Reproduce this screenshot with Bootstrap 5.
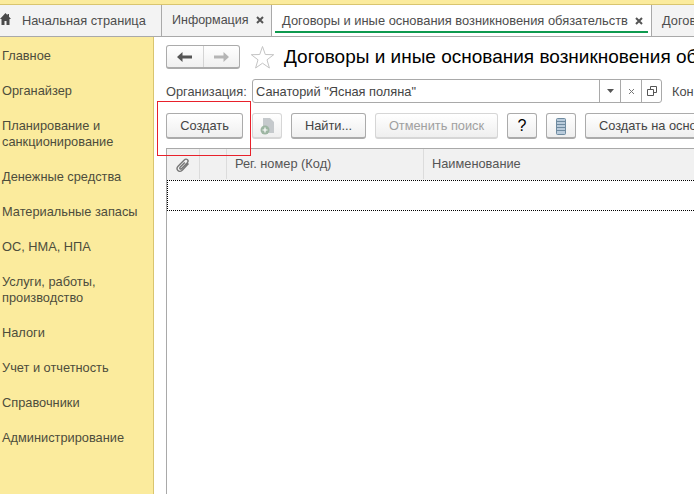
<!DOCTYPE html>
<html lang="ru">
<head>
    <title>Договоры</title>
    <meta charset="UTF-8">
    <link href="https://cdn.jsdelivr.net/npm/bootstrap@5.3.0/dist/css/bootstrap.min.css" rel="stylesheet">
    <style>
        html, body { width: 694px; height: 494px; overflow: hidden; }
        body { font-family: "Liberation Sans", Arial, sans-serif; font-size: 12.8px; color: #4a4a4a; background: #fff; }
        .top-strip { height: 5px; background: #fbeb9d; border-bottom: 1px solid #d9c56f; }
        .tab-bar { height: 32px; background: #f3f3f3; border-bottom: 1px solid #a9a9a9; }
        .tab-item { flex: none; height: 31px; padding-top: 8px; border-right: 1px solid #a9a9a9; white-space: nowrap; color: #4d4d4d; line-height: 15px; }
        .tab-home { width: 162px; padding-left: 22px; position: relative; }
        .tab-home svg { position: absolute; left: 0; top: 8px; }
        .tab-info { width: 110px; padding-left: 10px; font-size: 12.5px; }
        .tab-active { width: 380px; background: #fff; padding-left: 10px; position: relative; font-size: 12.9px; }
        .tab-active::after { content: ""; position: absolute; left: 3px; right: 3px; bottom: 3px; height: 2px; background: #0f9a4f; }
        .tab-next { padding-left: 10px; border-right: 0; }
        .tab-close { margin-left: 7px; vertical-align: 0; }
        .main-wrap { height: 457px; }
        .side-menu { width: 154px; flex: none; background: #fbeb9d; border-right: 1px solid #d9c56f; padding-top: 11px; }
        .side-link { padding: 0 2px; line-height: 16px; margin-bottom: 19px; color: #4d4d3c; }
        .work-area { width: 540px; flex: none; position: relative; padding: 8px 0 0 12px; overflow: hidden; }
        .head-row { height: 24px; }
        .nav-pair { width: 74px; height: 24px; flex: none; border: 1px solid #ababab; border-bottom-width: 2px; border-radius: 3px; background: linear-gradient(#fff, #f0f0f0); }
        .nav-half { flex: 1; }
        .nav-half + .nav-half { border-left: 1px solid #d4d4d4; }
        .fav-star { margin-left: 10px; flex: none; }
        .page-title { font-size: 19px; line-height: 24px; color: #000; white-space: nowrap; margin-left: 9px; }
        .org-row { margin-top: 10px; height: 24px; white-space: nowrap; }
        .org-label { width: 86px; flex: none; padding-top: 2px; }
        .org-input { width: 410px; height: 24px; flex: none; border: 1px solid #a9a9a9; border-radius: 3px; padding-left: 3px; line-height: 22px; color: #444; }
        .org-text { width: 343px; flex: none; padding-top: 1px; }
        .org-btn { width: 21px; height: 22px; flex: none; border-left: 1px solid #a9a9a9; }
        .org-more { margin-left: 10px; padding-top: 2px; }
        .tool-row { margin-top: 10px; height: 26px; gap: 9px; }
        .tool-btn { flex: none; height: 26px; padding-top: 1px; border: 1px solid #ababab; border-bottom-width: 2px; border-radius: 3px; background: linear-gradient(#fff, #efefef); color: #444; white-space: nowrap; }
        .tool-off { border-color: #d6d6d6; color: #a0a0a0; }
        .btn-create { width: 77px; }
        .btn-doc { width: 30px; }
        .btn-find { width: 75px; }
        .btn-cancel { width: 123px; }
        .btn-help { width: 30px; color: #000; font-size: 16px; }
        .btn-list { width: 30px; }
        .btn-based { width: 150px; justify-content: flex-start; padding-left: 13px; }
        .grid-box { margin-top: 9px; border-top: 1px solid #a9a9a9; border-left: 1px solid #a9a9a9; height: 346px; width: 600px; }
        .grid-head { height: 31px; background: #f1f1f1; }
        .grid-col { flex: none; height: 30px; border-right: 1px solid #dcdcdc; padding: 5px 0 0 8px; color: #555; }
        .col-clip { width: 33px; padding: 6px 0 0 9px; }
        .col-mark { width: 27px; }
        .col-code { width: 197px; }
        .col-name { width: 300px; }
        .grid-row { height: 31px; border: 1px dotted #000; }
        .red-frame { position: absolute; left: 3px; top: 64px; width: 94px; height: 55px; border: 1px solid #e8212b; pointer-events: none; }
    </style>
</head>
<body>
    <div class="top-strip"></div>
    <div class="tab-bar d-flex overflow-hidden">
        <div class="tab-item tab-home">
            <svg width="11" height="12" viewBox="0 0 11 12"><path d="M5.500 0 0 6h1.500v6h3V8h2v4h3V6H11L9 3.800V1H7.500v1.200z" fill="#4a4a4a"/></svg>
            Начальная страница
        </div>
        <div class="tab-item tab-info">Информация<svg class="tab-close" width="8" height="8" viewBox="0 0 8 8"><path d="m1 1 6 6M7 1 1 7" stroke="#555" stroke-width="2" fill="none"/></svg></div>
        <div class="tab-item tab-active">Договоры и иные основания возникновения обязательств<svg class="tab-close" width="8" height="8" viewBox="0 0 8 8"><path d="m1 1 6 6M7 1 1 7" stroke="#555" stroke-width="2" fill="none"/></svg></div>
        <div class="tab-item tab-next">Договоры</div>
    </div>
    <div class="main-wrap d-flex">
        <div class="side-menu">
            <div class="side-link">Главное</div>
            <div class="side-link">Органайзер</div>
            <div class="side-link">Планирование и санкционирование</div>
            <div class="side-link">Денежные средства</div>
            <div class="side-link">Материальные запасы</div>
            <div class="side-link">ОС, НМА, НПА</div>
            <div class="side-link">Услуги, работы, производство</div>
            <div class="side-link">Налоги</div>
            <div class="side-link">Учет и отчетность</div>
            <div class="side-link">Справочники</div>
            <div class="side-link">Администрирование</div>
        </div>
        <div class="work-area">
            <div class="head-row d-flex align-items-center">
                <div class="nav-pair d-flex">
                    <div class="nav-half d-flex align-items-center justify-content-center">
                        <svg width="15" height="10" viewBox="0 0 15 10"><path d="M0 5 5.500 0v3.500H15v3H5.500V10z" fill="#555"/></svg>
                    </div>
                    <div class="nav-half d-flex align-items-center justify-content-center">
                        <svg width="15" height="10" viewBox="0 0 15 10"><path d="M15 5 9.500 0v3.500H0v3h9.500V10z" fill="#b5b5b5"/></svg>
                    </div>
                </div>
                <svg class="fav-star" width="25" height="25" viewBox="0 0 25 25"><path d="M12.500 1.500 15.300 9.500 23.700 9.700 17 14.800 19.400 23 12.500 18.200 5.600 23 8 14.800 1.300 9.700 9.700 9.500z" fill="#fff" stroke="#c4c4c4"/></svg>
                <div class="page-title">Договоры и иные основания возникновения обязательств</div>
            </div>
            <div class="org-row d-flex align-items-center">
                <div class="org-label">Организация:</div>
                <div class="org-input d-flex">
                    <div class="org-text">Санаторий "Ясная поляна"</div>
                    <div class="org-btn d-flex align-items-center justify-content-center">
                        <svg width="7" height="4" viewBox="0 0 7 4"><path d="M0 0h7L3.500 4z" fill="#555"/></svg>
                    </div>
                    <div class="org-btn d-flex align-items-center justify-content-center">
                        <svg width="7" height="7" viewBox="0 0 7 7"><path d="m1 1 5 5M6 1 1 6" stroke="#777" fill="none"/></svg>
                    </div>
                    <div class="org-btn d-flex align-items-center justify-content-center">
                        <svg width="10" height="10" viewBox="0 0 10 10"><path d="M3.500 3V.5h6v6H7M.5 3.500h6v6h-6z" stroke="#555" fill="none"/></svg>
                    </div>
                </div>
                <div class="org-more">Кон</div>
            </div>
            <div class="tool-row d-flex">
                <div class="tool-btn btn-create d-flex align-items-center justify-content-center">Создать</div>
                <div class="tool-btn tool-off btn-doc d-flex align-items-center justify-content-center">
                    <svg width="14" height="17" viewBox="0 0 14 17"><path d="M3 0h7l4 4v11H3z" fill="#c5c9cc"/><circle cx="5" cy="12" r="4.500" fill="#9db5a2"/><path d="M5 9.500v5M2.500 12h5" stroke="#fff" stroke-width="1.200"/></svg>
                </div>
                <div class="tool-btn btn-find d-flex align-items-center justify-content-center">Найти...</div>
                <div class="tool-btn tool-off btn-cancel d-flex align-items-center justify-content-center">Отменить поиск</div>
                <div class="tool-btn btn-help d-flex align-items-center justify-content-center">?</div>
                <div class="tool-btn btn-list d-flex align-items-center justify-content-center">
                    <svg width="10" height="17" viewBox="0 0 10 17"><rect x=".5" y=".5" width="9" height="16" rx="1" fill="#b9cbdb" stroke="#6f8ba0"/><path d="M1 3.500h8M1 6.500h8M1 9.500h8M1 12.500h8" stroke="#6f8ba0"/></svg>
                </div>
                <div class="tool-btn btn-based d-flex align-items-center">Создать на основании</div>
            </div>
            <div class="grid-box">
                <div class="grid-head d-flex">
                    <div class="grid-col col-clip">
                        <svg width="14" height="15" viewBox="0 0 14 15"><path d="M12.500 5.500 6.500 12c-1.400 1.400-3.500 1.600-4.600.5S.9 9.500 2.300 8.100L8.300 2c1-1 2.400-1.100 3.200-.3s.7 2-.2 3L5.700 10.500c-.6.600-1.300.7-1.700.3s-.3-1.100.3-1.700l4.500-4.700" fill="none" stroke="#777" stroke-width="1.400"/></svg>
                    </div>
                    <div class="grid-col col-mark"></div>
                    <div class="grid-col col-code">Рег. номер (Код)</div>
                    <div class="grid-col col-name">Наименование</div>
                </div>
                <div class="grid-row"></div>
            </div>
            <div class="red-frame"></div>
        </div>
    </div>
</body>
</html>
